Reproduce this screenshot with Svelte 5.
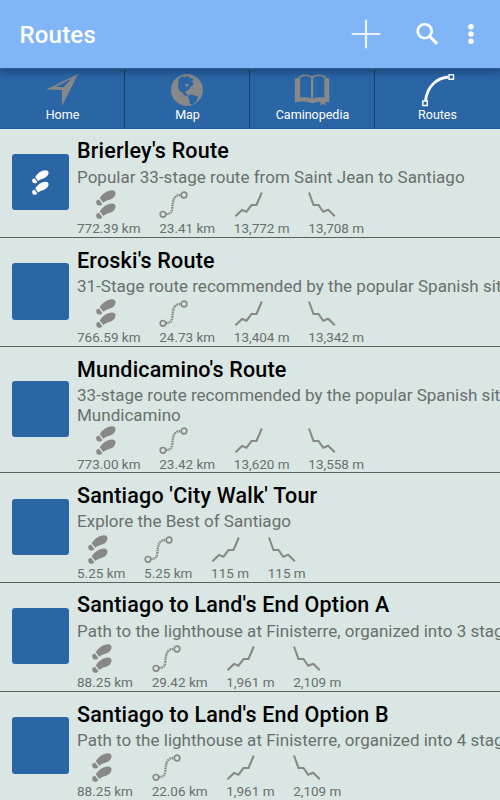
<script>
  const tabs = [
    { name: 'Home', icon: 'home' },
    { name: 'Map', icon: 'map' },
    { name: 'Caminopedia', icon: 'book' },
    { name: 'Routes', icon: 'curve' }
  ];
  const routes = [
    { title: "Brierley's Route", lines: ['Popular 33-stage route from Saint Jean to Santiago'], stats: ['772.39 km', '23.41 km', '13,772 m', '13,708 m'], active: true },
    { title: "Eroski's Route", lines: ['31-Stage route recommended by the popular Spanish site'], stats: ['766.59 km', '24.73 km', '13,404 m', '13,342 m'] },
    { title: "Mundicamino's Route", lines: ['33-stage route recommended by the popular Spanish site', 'Mundicamino'], stats: ['773.00 km', '23.42 km', '13,620 m', '13,558 m'] },
    { title: "Santiago 'City Walk' Tour", lines: ['Explore the Best of Santiago'], stats: ['5.25 km', '5.25 km', '115 m', '115 m'] },
    { title: "Santiago to Land's End Option A", lines: ['Path to the lighthouse at Finisterre, organized into 3 stages'], stats: ['88.25 km', '29.42 km', '1,961 m', '2,109 m'] },
    { title: "Santiago to Land's End Option B", lines: ['Path to the lighthouse at Finisterre, organized into 4 stages'], stats: ['88.25 km', '22.06 km', '1,961 m', '2,109 m'] }
  ];
</script>

{#snippet foot()}
  <path d="M3.800 8.300C6 4 11 .2 16 .2c2.500 0 3.700 1.300 3.500 3.300-.2 3-2.800 5.300-6 6.300-2.800.8-4.300 1.500-6.300 3z" />
  <path d="M3 9.500 6.300 13.900C5.500 15.200 4 15.600 2.600 15.400.6 15.100 0 13.600.3 10.700z" />
{/snippet}

{#snippet feet()}
  <g>{@render foot()}</g>
  <g transform="translate(0 13.300)">{@render foot()}</g>
{/snippet}

<main>
  <header>
    <h1>Routes</h1>
    <svg class="plus" width="30" height="30" viewBox="0 0 30 30"><path d="M15 .700v28.600M.700 15h28.600" stroke="#e9f3ff" stroke-width="2.200" /></svg>
    <svg class="search" width="24" height="24" viewBox="0 0 24 24" fill="none" stroke="#fff"><circle cx="9.700" cy="9.200" r="7" stroke-width="2.600" /><path d="M14.500 14.200l7.700 7.700" stroke-width="3" /></svg>
    <svg class="more" width="8" height="24" viewBox="0 0 8 24" fill="#fff"><circle cx="4" cy="4.700" r="2.700" /><circle cx="4" cy="12" r="2.700" /><circle cx="4" cy="19.300" r="2.700" /></svg>
  </header>

  <nav>
    {#each tabs as tab}
      <div class="tab">
        <svg class={tab.icon} width="36" height="34" viewBox="0 0 36 34">
          {#if tab.icon === 'home'}
            <path fill="#888" fill-rule="evenodd" d="M34 1 18 33V17L2 16.500zM27.500 5.500 12 13.700l7.600.6z" />
          {:else if tab.icon === 'map'}
            <circle cx="18" cy="17" r="16" fill="#888" />
            <path fill="#2a65a6" d="M9.500 6l4-2.500 2.500 1 2-1.500 2.500 1-.5 1.500 3-.5 1.500 2-2 1.500 2 1.500-1 2.500-2 1-1 2.500-3 2-1.500 1 1.500 2 2 1-1 1-3-.5-2-3-3-1.500-1.500-4 .5-5z" />
            <path fill="#2a65a6" d="M18.800 23l3-1.500 4 1 3.500 1.500-2 4.500-3.500 3-3-.5-.5-4z" />
            <path fill="#888" d="M15.500 12l3-1.500 1.500 1.500-2 2z" />
          {:else if tab.icon === 'book'}
            <path fill="#888" fill-rule="evenodd" d="M.8 5.500 4.800 4.500V3.300C9 .8 14 .9 18 3.300 22 .9 27.500.8 31.700 3.300V4.500L35.300 5.500V29.500C34 29 32.800 28.800 31.500 28.800V33L29 30.800 26.500 33V28.700C23.500 28.800 21 29.400 18 30.200 12 28.200 6.500 28 .8 29.500zM6.200 4.400V24.600C10.500 23.800 14 24.100 17 25.700V4.700C13.500 2.800 10 2.800 6.200 4.400zM19.300 4.700V25.700C22.500 24.100 26 23.800 30.300 24.600V4.400C26.400 2.800 22.700 2.800 19.300 4.700z" />
          {:else}
            <path fill="none" stroke="#fff" stroke-width="2.800" d="M5.500 28C7 14 16 5 28.500 4" />
            <path fill="#2a65a6" stroke="#fff" stroke-width="1.500" d="M2.800 28h4.500v4.500H2.800zM29 1.800h4.500v4.500H29z" />
          {/if}
        </svg>
        <span>{tab.name}</span>
      </div>
    {/each}
  </nav>

  <section>
    {#each routes as route}
      <article>
        <div class="tile">
          {#if route.active}
            <svg width="17" height="25" viewBox="0 0 20 29" preserveAspectRatio="none" fill="#fff">{@render feet()}</svg>
          {/if}
        </div>
        <div class="body">
          <h2>{route.title}</h2>
          <div class="desc" class:two={route.lines.length > 1}>
            {#each route.lines as line}<p>{line}</p>{/each}
          </div>
          <div class="stats">
            {#each route.stats as stat, i}
              <div class="stat" class:first={i === 0}>
                {#if i === 0}
                  <svg width="20" height="29" viewBox="0 0 20 29" fill="#888">{@render feet()}</svg>
                {:else}
                  <svg width="29" height="29" viewBox="0 0 29 29" fill="none" stroke="#888" stroke-width="2.100">
                    {#if i === 1}
                      <circle cx="4" cy="24.300" r="2.800" stroke-width="1.700" /><circle cx="25" cy="5" r="2.800" stroke-width="1.700" />
                      <path stroke-width="2.400" stroke-dasharray="1.500 .8" d="M7 24C11.500 24 13 22 13.300 18S14 12 14.500 10 17 5 22 5" />
                    {:else if i === 2}
                      <path d="M1.500 26.300 8 20l4.500 1.700 5-6.700h5L27.800 2.500" />
                    {:else}
                      <path d="M1 2.500 5.500 15h5l4.700 6.800 5-2L26.800 26.300" />
                    {/if}
                  </svg>
                {/if}
                <span>{stat}</span>
              </div>
            {/each}
          </div>
        </div>
      </article>
    {/each}
  </section>
</main>

<style>
  :global(body) { margin: 0; }
  main { width: 500px; height: 800px; overflow: hidden; display: flex; flex-direction: column; background: #dae6e3; font-family: Roboto, sans-serif; }
  header { height: 68px; flex: none; box-sizing: border-box; display: flex; align-items: center; padding: 0 25px 0 19.500px; background: #80b6f8; color: #fff; z-index: 1; box-shadow: 0 1px 1px #305d90, 0 3px 8px rgba(0, 20, 50, .5); }
  h1 { margin: 2px auto 0 0; font-size: 24px; font-weight: 500; line-height: 28px; letter-spacing: .2px; }
  .plus { margin-right: 34px; }
  .search { margin-right: 28px; }
  nav { height: 60.500px; flex: none; display: flex; background: #2a65a6; box-sizing: border-box; border-bottom: 1px solid #2058a0; }
  .tab { flex: 1; min-width: 0; display: flex; flex-direction: column; align-items: center; color: #fff; padding-top: 5px; }
  .tab:not(:last-child) { box-shadow: inset -1px 0 #193f6b; }
  .tab span { font-size: 12.500px; line-height: 15px; }
  .home, .map, .book { margin-right: 2px; }
  article { box-sizing: border-box; display: flex; align-items: center; border-bottom: 1px solid #59615f; height: 109.300px; }
  article:has(.two) { height: 126.200px; }
  .tile { flex: none; width: 57px; height: 56.500px; margin: 0 8px 1px 12px; border-radius: 3px; background: #2a65a6; display: flex; align-items: center; justify-content: center; }
  .body { align-self: flex-start; min-width: 0; white-space: nowrap; }
  h2 { margin: 9.900px 0 0; font-size: 21.500px; line-height: 26px; font-weight: 500; color: #000; letter-spacing: .2px; }
  .desc { height: 25.700px; padding-top: 3.300px; box-sizing: border-box; color: #68706e; }
  .desc.two { height: 42.700px; }
  p { margin: 0; font-size: 17px; line-height: 19.700px; letter-spacing: .02px; }
  .stats { display: flex; gap: 18.700px; }
  .stat { display: flex; flex-direction: column; align-items: flex-start; }
  .stat svg { display: block; }
  .first svg { align-self: center; position: relative; left: -3px; }
  .stat span { font-size: 13.500px; line-height: 16px; margin-top: 1px; color: #68706e; }
</style>
